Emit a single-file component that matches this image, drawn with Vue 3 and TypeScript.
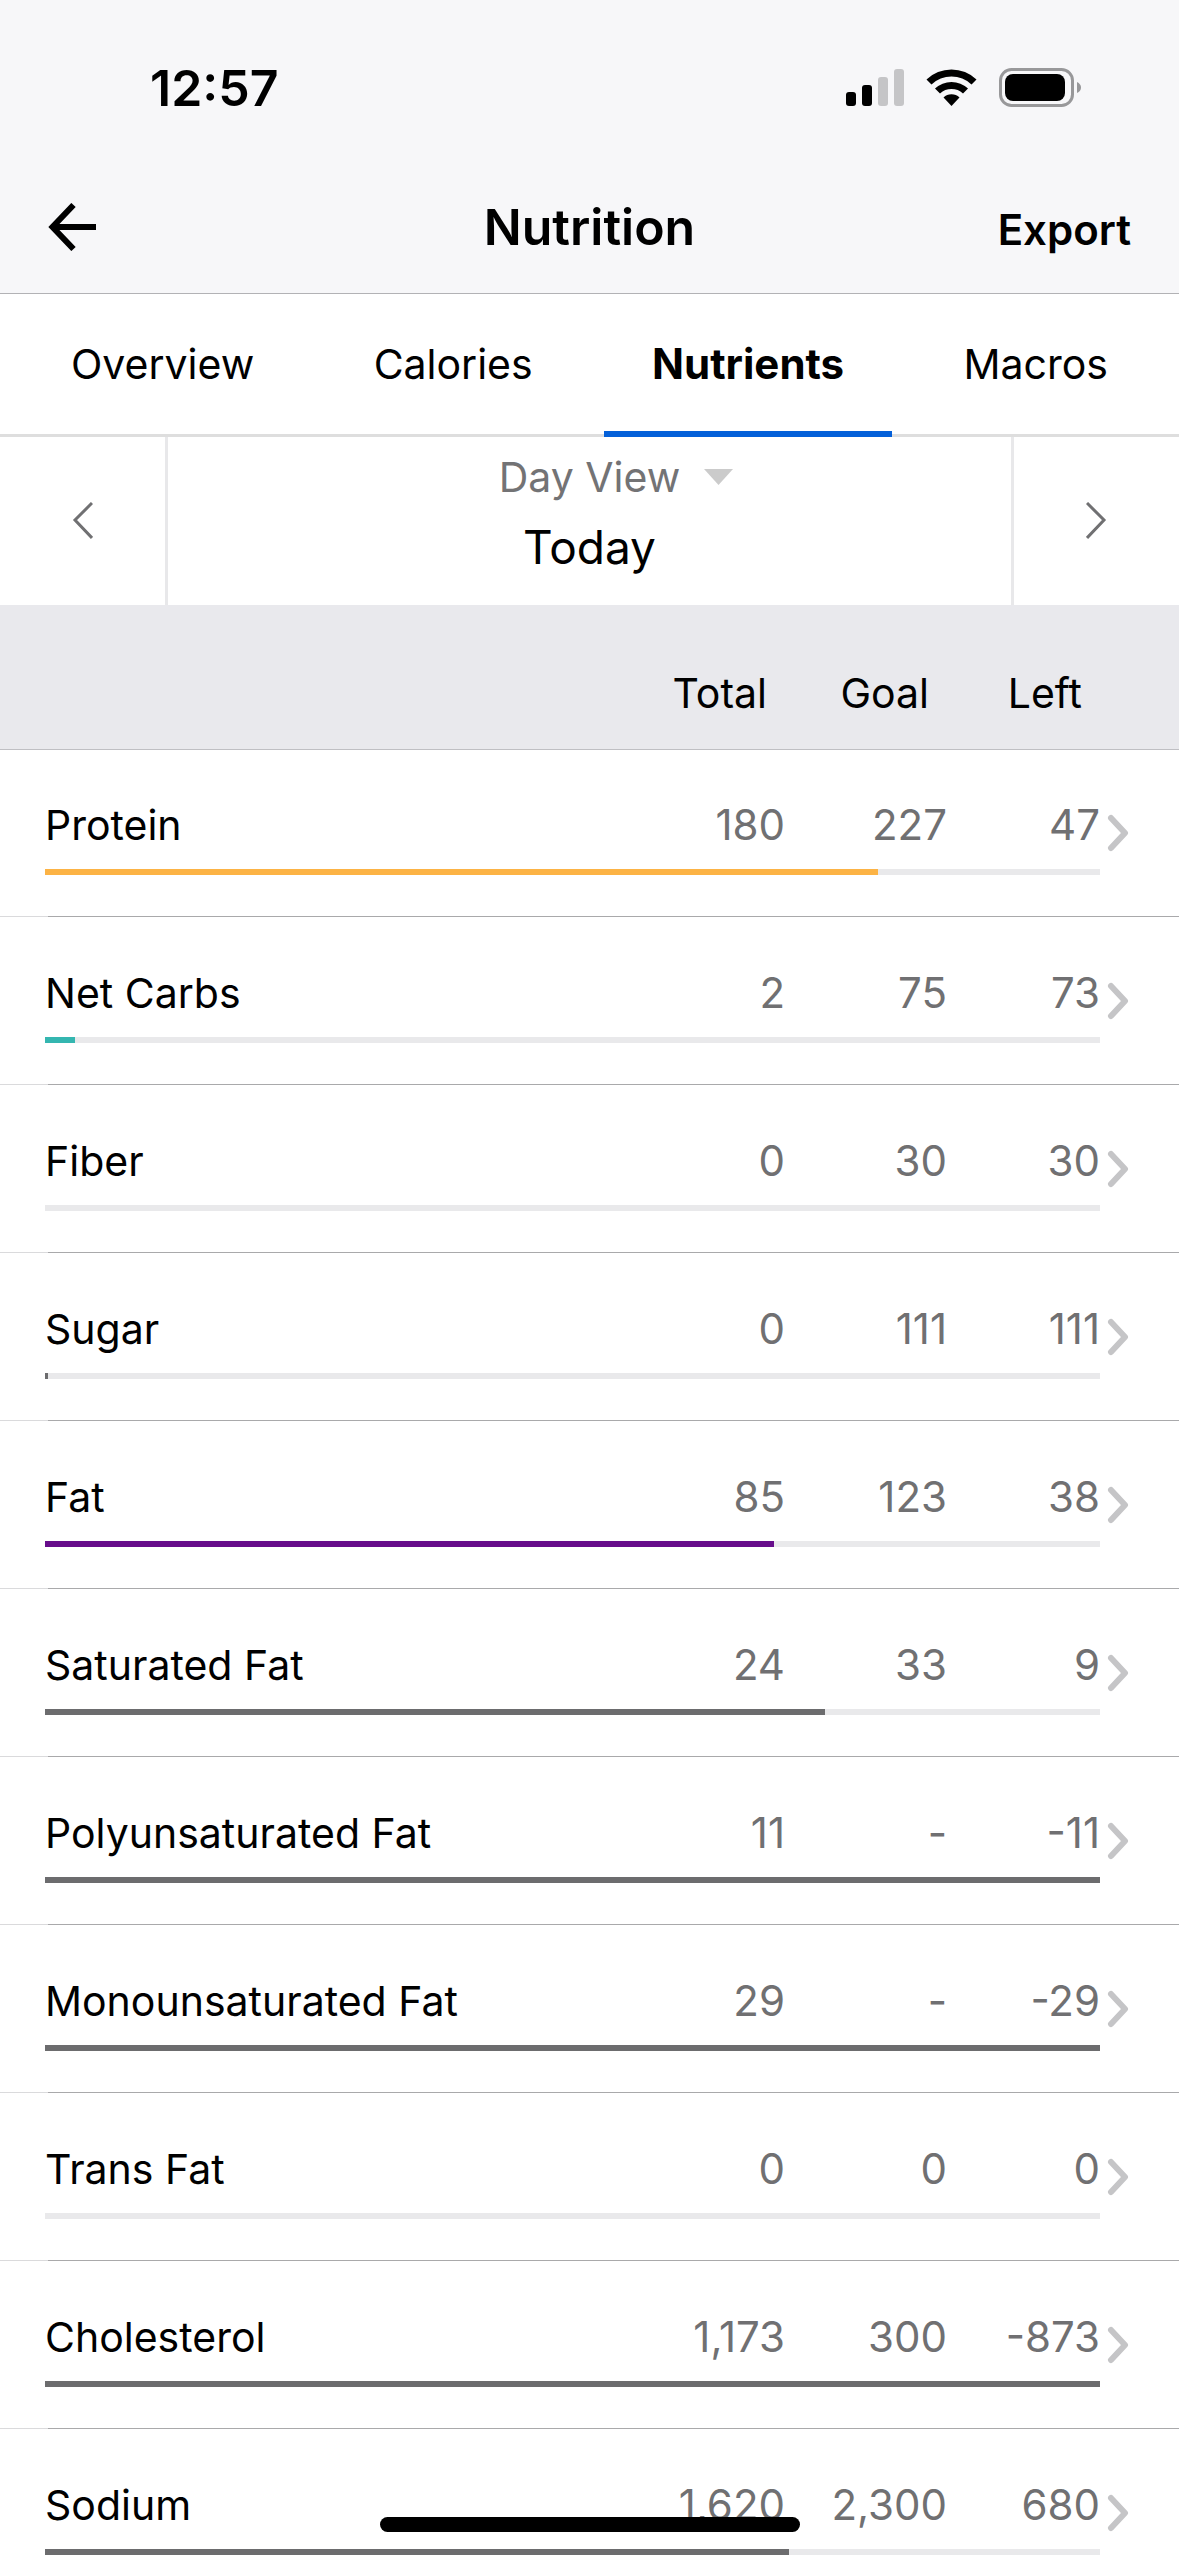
<script setup lang="ts">
import { ref } from 'vue'

interface Nutrient {
  name: string
  total: string
  goal: string
  left: string
  percent: number
  tone: 'protein' | 'carbs' | 'fat' | 'plain'
}

const tabs = ['Overview', 'Calories', 'Nutrients', 'Macros']
const activeTab = ref('Nutrients')
const view = ref('Day View')

const nutrients: Nutrient[] = [
  { name: 'Protein', total: '180', goal: '227', left: '47', percent: 79, tone: 'protein' },
  { name: 'Net Carbs', total: '2', goal: '75', left: '73', percent: 2.8, tone: 'carbs' },
  { name: 'Fiber', total: '0', goal: '30', left: '30', percent: 0, tone: 'plain' },
  { name: 'Sugar', total: '0', goal: '111', left: '111', percent: 0.25, tone: 'plain' },
  { name: 'Fat', total: '85', goal: '123', left: '38', percent: 69.1, tone: 'fat' },
  { name: 'Saturated Fat', total: '24', goal: '33', left: '9', percent: 73.9, tone: 'plain' },
  { name: 'Polyunsaturated Fat', total: '11', goal: '-', left: '-11', percent: 100, tone: 'plain' },
  { name: 'Monounsaturated Fat', total: '29', goal: '-', left: '-29', percent: 100, tone: 'plain' },
  { name: 'Trans Fat', total: '0', goal: '0', left: '0', percent: 0, tone: 'plain' },
  { name: 'Cholesterol', total: '1,173', goal: '300', left: '-873', percent: 100, tone: 'plain' },
  { name: 'Sodium', total: '1,620', goal: '2,300', left: '680', percent: 70.5, tone: 'plain' },
]
</script>

<template>
  <div class="screen">
    <header class="top">
      <div class="status">
        <span class="time">12:57</span>
        <div class="indicators">
          <svg width="58" height="40" viewBox="0 0 58 40" aria-hidden="true">
            <rect x="0" y="24" width="10" height="14" rx="3" />
            <rect x="16" y="17" width="10" height="21" rx="3" />
            <rect x="32" y="9" width="10" height="29" rx="3" fill="#c5c5c7" />
            <rect x="48" y="1" width="10" height="37" rx="3" fill="#c5c5c7" />
          </svg>
          <svg width="51" height="40" viewBox="0 0 51 40" aria-hidden="true">
            <path d="M0.5 11.5 A36 36 0 0 1 50.5 11.5 L45.5 16.5 A29 29 0 0 0 5.500 16.500 Z" />
            <path d="M9 20.500 A24 24 0 0 1 42 20.500 L37 25.500 A17 17 0 0 0 14 25.500 Z" />
            <path d="M17.500 29.500 A11.500 11.500 0 0 1 33.500 29.500 L25.500 38 Z" />
          </svg>
          <svg width="83" height="40" viewBox="0 0 83 40" aria-hidden="true">
            <rect x="1.500" y="1.500" width="72" height="36" rx="11" fill="none" stroke="#98989a" stroke-width="3" />
            <rect x="6" y="6" width="60" height="27" rx="8" />
            <path d="M78 14 Q82 16 82 19.500 Q82 23 78 25 Z" fill="#98989a" />
          </svg>
        </div>
      </div>
      <div class="nav">
        <button class="back" type="button" aria-label="Back">
          <svg width="48" height="48" viewBox="0 0 48 48" fill="none" stroke="#000" stroke-width="6" aria-hidden="true">
            <path d="M48 24H5M25.500 2L4.500 24L25.500 46" />
          </svg>
        </button>
        <h1>Nutrition</h1>
        <button class="export" type="button">Export</button>
      </div>
    </header>

    <nav class="tabs" role="tablist">
      <button
        v-for="tab in tabs"
        :key="tab"
        type="button"
        role="tab"
        class="tab"
        :class="{ active: tab === activeTab }"
        :aria-selected="tab === activeTab"
        @click="activeTab = tab"
      >
        {{ tab }}
      </button>
    </nav>

    <section class="period">
      <button type="button" class="step prev" aria-label="Previous day">
        <svg width="21" height="38" viewBox="0 0 21 38" fill="none" stroke="#707072" stroke-width="3" aria-hidden="true">
          <path d="M20 1L3 18L20 36" />
        </svg>
      </button>
      <div class="current">
        <div class="view">
          <select v-model="view" aria-label="View">
            <option>Day View</option>
            <option>Week View</option>
          </select>
          <svg width="29" height="16" viewBox="0 0 29 16" aria-hidden="true">
            <path d="M0 0H29L14.500 16Z" fill="#cbcbcb" />
          </svg>
        </div>
        <div class="day">Today</div>
      </div>
      <button type="button" class="step next" aria-label="Next day">
        <svg width="21" height="38" viewBox="0 0 21 38" fill="none" stroke="#707072" stroke-width="3" aria-hidden="true">
          <path d="M1 1L18 18L1 36" />
        </svg>
      </button>
    </section>

    <main class="list">
      <table>
        <colgroup>
          <col />
          <col class="c-total" />
          <col class="c-goal" />
          <col class="c-left" />
          <col class="c-more" />
        </colgroup>
        <thead>
          <tr>
            <td></td>
            <th scope="col">Total</th>
            <th scope="col">Goal</th>
            <th scope="col">Left</th>
            <td></td>
          </tr>
        </thead>
        <tbody v-for="n in nutrients" :key="n.name">
          <tr class="values">
            <th scope="row">{{ n.name }}</th>
            <td>{{ n.total }}</td>
            <td>{{ n.goal }}</td>
            <td>{{ n.left }}</td>
            <td rowspan="2" class="more">
              <button type="button" :aria-label="`${n.name} details`">
                <svg width="22" height="38" viewBox="0 0 22 38" fill="none" stroke="#c5c5c7" stroke-width="6" stroke-linecap="round" stroke-linejoin="round" aria-hidden="true">
                  <path d="M4 4L18 19L4 34" />
                </svg>
              </button>
            </td>
          </tr>
          <tr>
            <td colspan="4" class="meter">
              <div class="track" role="progressbar" :aria-label="n.name" :aria-valuenow="n.percent">
                <div class="fill" :class="n.tone" :style="{ width: n.percent + '%' }"></div>
              </div>
            </td>
          </tr>
        </tbody>
      </table>
    </main>

    <div class="home"></div>
  </div>
</template>

<style>
body {
  background: #fff;
}
</style>

<style scoped>
.screen {
  display: flex;
  flex-direction: column;
  height: 100vh;
  overflow: hidden;
  background: #fff;
  color: #000;
  font-family: Inter, "Liberation Sans", sans-serif;
  font-size: 41px;
  line-height: 60px;
}

button,
select {
  margin: 0;
  padding: 0;
  border: 0;
  background: none;
  color: inherit;
  font: inherit;
}

svg {
  display: block;
  flex: none;
}

.top {
  background: #f7f7f9;
  border-bottom: 1px solid #b2b2b5;
}

.status {
  display: flex;
  align-items: center;
  justify-content: space-between;
  box-sizing: border-box;
  height: 160px;
  padding: 16px 97px 0 150px;
}

.time {
  font-size: 50px;
  font-weight: 600;
}

.indicators {
  display: flex;
  gap: 22px;
}

.nav {
  display: grid;
  grid-template-columns: 1fr auto 1fr;
  align-items: baseline;
  padding: 34px 48px 33px;
}

.back {
  align-self: center;
  justify-self: start;
}

h1 {
  margin: 0;
  font-size: 50px;
  font-weight: 600;
  line-height: 66px;
}

.export {
  justify-self: end;
  font-size: 42px;
  font-weight: 600;
}

.tabs {
  display: flex;
  justify-content: space-between;
  padding: 0 23px;
  border-bottom: 3px solid #dedede;
}

.tab {
  position: relative;
  height: 140px;
  padding: 0 48px;
}

.tab.active {
  font-size: 42px;
  font-weight: 700;
}

.tab.active::after {
  content: "";
  position: absolute;
  right: 0;
  bottom: -3px;
  left: 0;
  height: 6px;
  background: #0460d9;
}

.period {
  display: flex;
  height: 168px;
  flex: none;
}

.step {
  display: flex;
  align-items: center;
  justify-content: center;
  box-sizing: border-box;
  width: 168px;
}

.prev {
  border-right: 3px solid #e8e8ea;
}

.next {
  border-left: 3px solid #e8e8ea;
}

.current {
  flex: 1;
  padding-top: 10px;
}

.view {
  display: grid;
  grid-template-columns: 1fr auto 1fr;
  align-items: center;
  column-gap: 24px;
  color: #737375;
}

.view select {
  grid-column: 2;
  height: 60px;
  appearance: none;
  field-sizing: content;
}

.day {
  font-size: 46px;
  line-height: 80px;
  text-align: center;
}

.list {
  flex: 1;
  min-height: 0;
  overflow: hidden;
}

table {
  width: 100%;
  border-spacing: 0;
  table-layout: fixed;
}

.c-total,
.c-goal {
  width: 162px;
}

.c-left {
  width: 153px;
}

.c-more {
  width: 79px;
}

th,
td {
  padding: 0;
  font-weight: 400;
  text-align: right;
}

thead {
  background: #e9e9ed;
}

thead th {
  padding: 58px 18px 26px 0;
}

tbody {
  background: linear-gradient(90deg, #dadadc 48px, #a9a9ab 48px) left bottom / 100% 1px no-repeat;
}

thead + tbody {
  background:
    linear-gradient(#bfbfc3, #bfbfc3) left top / 100% 1px no-repeat,
    linear-gradient(90deg, #dadadc 48px, #a9a9ab 48px) left bottom / 100% 1px no-repeat;
}

.values th,
.values td {
  padding-top: 46px;
}

.values th {
  padding-left: 45px;
  text-align: left;
  white-space: nowrap;
}

.values td {
  color: #707072;
  font-size: 42px;
}

.values .more {
  padding: 0 0 0 7px;
  vertical-align: middle;
}

.more button {
  display: block;
}

.meter {
  padding: 14px 0 42px 45px;
}

.track {
  height: 6px;
  background: #e9e9eb;
}

.fill {
  height: 6px;
}

.protein {
  background: #fcb345;
}

.carbs {
  background: #34b6b0;
}

.fat {
  background: #670d8b;
}

.plain {
  background: #6c6c6e;
}

.home {
  position: fixed;
  bottom: 24px;
  left: 50%;
  width: 420px;
  height: 15px;
  margin-left: -210px;
  border-radius: 8px;
  background: #000;
}
</style>
